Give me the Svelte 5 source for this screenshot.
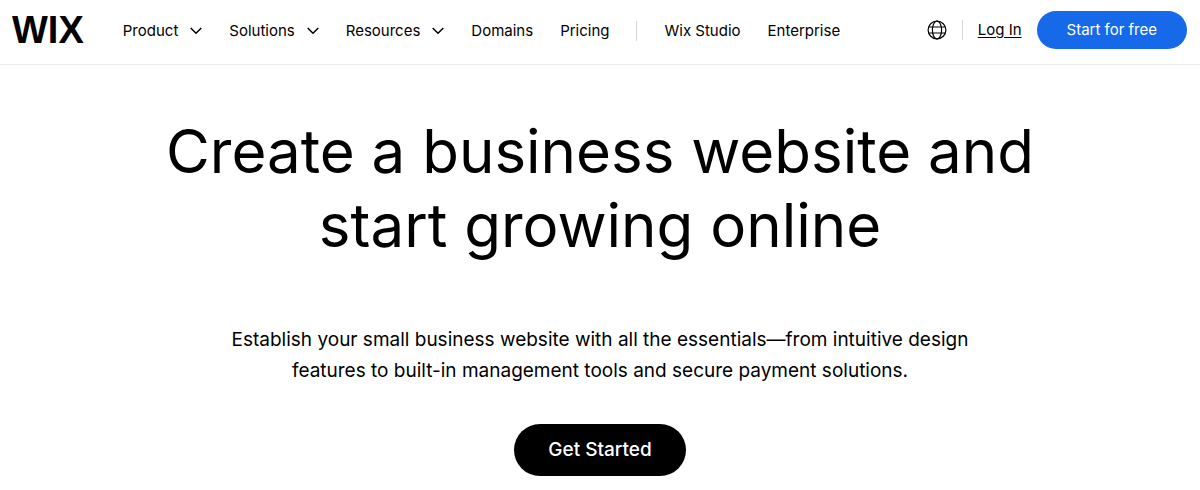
<script lang="ts">
	interface NavItem {
		label: string;
		menu?: boolean;
	}

	const productLinks: NavItem[] = [
		{ label: 'Product', menu: true },
		{ label: 'Solutions', menu: true },
		{ label: 'Resources', menu: true },
		{ label: 'Domains' },
		{ label: 'Pricing' }
	];

	const brandLinks: NavItem[] = [{ label: 'Wix Studio' }, { label: 'Enterprise' }];
</script>

<header class="header">
	<a class="logo" href="/">WIX</a>

	<nav class="nav" aria-label="Main">
		{#each productLinks as item (item.label)}
			{#if item.menu}
				<button class="nav-item" type="button" aria-haspopup="true">
					{item.label}
					<svg class="chevron" viewBox="0 0 12 8" aria-hidden="true">
						<path d="M0.7 1 L6 6.3 L11.3 1" fill="none" stroke="currentColor" stroke-width="1.5" />
					</svg>
				</button>
			{:else}
				<a class="nav-item" href="/">{item.label}</a>
			{/if}
		{/each}
		<span class="divider"></span>
		{#each brandLinks as item (item.label)}
			<a class="nav-item" href="/">{item.label}</a>
		{/each}
	</nav>

	<div class="actions">
		<button class="language" type="button" aria-label="Language">
			<svg class="globe" viewBox="0 0 20 20" fill="none" stroke="currentColor" aria-hidden="true">
				<circle cx="10" cy="10" r="8.9" />
				<ellipse cx="10" cy="10" rx="4.6" ry="8.9" />
				<path d="M1.9 7 H18.1 M1.9 13 H18.1" />
			</svg>
		</button>
		<span class="divider"></span>
		<a class="login" href="/">Log In</a>
		<a class="start" href="/">Start for free</a>
	</div>
</header>

<main class="hero">
	<h1>Create a business website and start growing online</h1>
	<p>
		Establish your small business website with all the essentials—from intuitive design features to
		built-in management tools and secure payment solutions.
	</p>
	<a class="cta" href="/">Get Started</a>
</main>

<style>
	:global(body) {
		background: #fff;
		color: #000;
		font-family: Inter, 'Liberation Sans', sans-serif;
	}

	a {
		color: inherit;
		text-decoration: none;
	}

	button {
		padding: 0;
		border: 0;
		background: none;
		color: inherit;
		font: inherit;
		cursor: pointer;
	}

	.header {
		display: flex;
		align-items: center;
		box-sizing: border-box;
		min-height: 65px;
		padding: 0 13px 4px 12px;
		border-bottom: 1px solid #ebebeb;
		font-size: 15px;
		line-height: 24px;
		white-space: nowrap;
	}

	.logo {
		font-family: 'Liberation Sans', sans-serif;
		font-size: 38px;
		font-weight: 700;
		line-height: 40px;
	}

	.nav {
		display: flex;
		align-items: center;
		gap: 27px;
		margin-left: 39px;
		padding-top: 2px;
	}

	.nav-item {
		display: flex;
		align-items: center;
		gap: 12px;
	}

	.chevron {
		width: 12px;
		height: 8px;
	}

	.divider {
		width: 1px;
		height: 20px;
		background: #d5d5dc;
	}

	.actions {
		display: flex;
		align-items: center;
		gap: 15px;
		margin-left: auto;
	}

	.language {
		display: flex;
	}

	.globe {
		width: 20px;
		height: 20px;
		stroke-width: 1.2;
	}

	.login {
		text-decoration: underline;
		text-underline-offset: 2px;
	}

	.start {
		padding: 7px 30px;
		border-radius: 20px;
		background: #166aea;
		color: #fff;
	}

	.hero {
		display: flex;
		flex-direction: column;
		align-items: center;
		padding: 49px 24px 14px;
		text-align: center;
	}

	h1 {
		max-width: 960px;
		margin: 0;
		font-size: 60px;
		font-weight: 400;
		line-height: 74px;
	}

	p {
		max-width: 760px;
		margin: 62px 0 38px;
		font-size: 19px;
		line-height: 31px;
	}

	.cta {
		padding: 13px 34px;
		border-radius: 26px;
		background: #000;
		color: #fff;
		font-size: 19px;
		font-weight: 500;
		line-height: 26px;
	}
</style>
